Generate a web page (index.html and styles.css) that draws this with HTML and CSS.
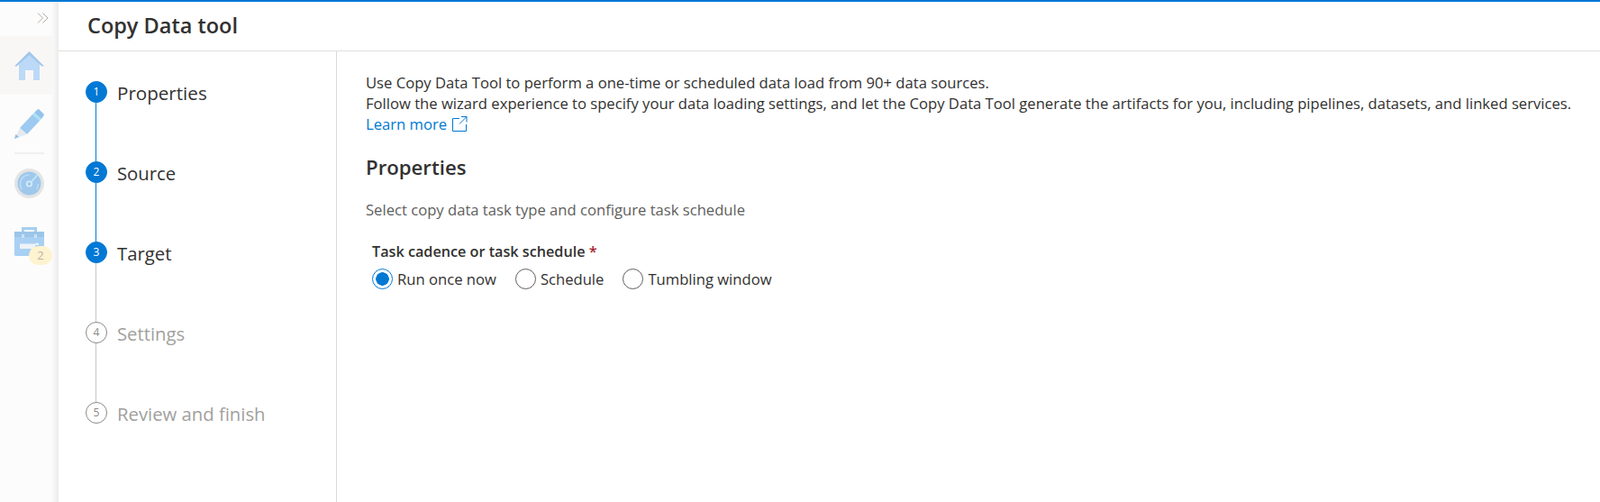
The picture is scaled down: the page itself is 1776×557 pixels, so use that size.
FILE: index.html
```html
<!DOCTYPE html>
<html lang="en">
<head>
    <meta charset="UTF-8">
    <title>Copy Data tool</title>
    <link rel="stylesheet" href="styles.css">
</head>
<body>
    <div class="app">
        <nav class="rail">
            <div class="rail-toggle">
                <svg width="13" height="12" viewBox="0 0 13 12"><path d="M1 .5l5.5 5.5L1 11.500M6.500 .5L12 6l-5.500 5.500" fill="none" stroke="#b3aca6" stroke-width="1"/></svg>
            </div>
            <div class="rail-item rail-home">
                <svg width="33" height="32" viewBox="0 0 33 32"><path d="M5 14L16.500 3 28 14V32H21V21H12V32H5Z" fill="#bcd9f7"/><path d="M16.500 0L33 16.500H30.500L16.500 4 2.500 16.500H0Z" fill="#9fc6ea"/></svg>
            </div>
            <div class="rail-item rail-pencil">
                <svg width="33" height="33" viewBox="0 0 33 33"><path d="M25 1l2-1 6 6-1 2-2 3-8-7z" fill="#92c3ec"/><path d="M22 4l8 7-2 2-8-7z" fill="#a9e0f5"/><path d="M20 6l8 7-14 15-8-7z" fill="#9ccaf0"/><path d="M6 21l8 7-14 5z" fill="#e6e9ee"/><path d="M0 33l1.500-5 3.500 3z" fill="#8fc0ea"/></svg>
            </div>
            <div class="rail-sep"></div>
            <div class="rail-item">
                <svg width="33" height="33" viewBox="0 0 33 33"><circle cx="16.500" cy="16.500" r="16.500" fill="#e4e4e4"/><circle cx="16.500" cy="16.500" r="13" fill="#9fc8ec"/><circle cx="16.500" cy="17" r="2.800" fill="none" stroke="#d5eefa" stroke-width="1.600"/><path d="M18.500 15l8-9" stroke="#c4ecf8" stroke-width="1.500"/><path d="M8.500 23a10 10 0 0 1 8-16M24.500 23a10 10 0 0 0 2-6" fill="none" stroke="#c4e3f6" stroke-width="1.200"/></svg>
            </div>
            <div class="rail-item rail-tools">
                <svg width="33" height="33" viewBox="0 0 33 33"><path d="M8 6V0h17v6h-3V3H11v3z" fill="#a5cff2"/><rect y="5" width="33" height="27" rx="1.500" fill="#a8d0f3"/><rect y="5" width="33" height="6" fill="#9cc5e8"/><rect x="8" y="8" width="3" height="4" fill="#c8e2f8"/><rect x="22" y="8" width="3" height="4" fill="#c8e2f8"/><path d="M6 18.500H23C24 17 26 17 27 18.500V20H23V24H6Z" fill="#eef2f6"/></svg>
                <span class="rail-badge">2</span>
            </div>
        </nav>
        <div class="main">
            <header class="title-bar">Copy Data tool</header>
            <div class="wizard">
                <ol class="steps">
                    <li class="step done current">
                        <span class="step-num">1</span><span class="step-label">Properties</span>
                    </li>
                    <li class="step done">
                        <span class="step-num">2</span><span class="step-label">Source</span>
                    </li>
                    <li class="step done last-done">
                        <span class="step-num">3</span><span class="step-label">Target</span>
                    </li>
                    <li class="step">
                        <span class="step-num">4</span><span class="step-label">Settings</span>
                    </li>
                    <li class="step">
                        <span class="step-num">5</span><span class="step-label">Review and finish</span>
                    </li>
                </ol>
                <section class="content">
                    <p class="intro">Use Copy Data Tool to perform a one-time or scheduled data load from 90+ data sources.</p>
                    <p class="intro">Follow the wizard experience to specify your data loading settings, and let the Copy Data Tool generate the artifacts for you, including pipelines, datasets, and linked services.</p>
                    <a class="learn" href="#">Learn more
                        <svg width="17" height="17" viewBox="0 0 17 17"><path d="M8 2.500H.5v14h15V9M10 .5h6v6M16 .5L8 8.500" fill="none" stroke="#0078d4" stroke-width="1"/></svg>
                    </a>
                    <h2>Properties</h2>
                    <p class="sub">Select copy data task type and configure task schedule</p>
                    <div class="field">
                        <div class="field-label">Task cadence or task schedule <span class="req">*</span></div>
                        <div class="radios">
                            <label class="radio checked"><span class="dot"></span>Run once now</label>
                            <label class="radio"><span class="dot"></span>Schedule</label>
                            <label class="radio"><span class="dot"></span>Tumbling window</label>
                        </div>
                    </div>
                </section>
            </div>
        </div>
    </div>
</body>
</html>
```

FILE: styles.css
```css
html, body {
    margin: 0;
    height: 100%;
    overflow: hidden;
}
body {
    font-family: "Open Sans", "Noto Sans", sans-serif;
    color: #323130;
    background-color: #fff;
}
.app {
    display: flex;
    height: 557px;
    border-top: 2px solid #0078d4;
    box-sizing: border-box;
}
.rail {
    width: 65px;
    flex-shrink: 0;
    background: linear-gradient(90deg, #fcfcfc 57px, #ebebeb 65px);
    display: flex;
    flex-direction: column;
}
.rail-toggle {
    height: 38px;
    display: flex;
    justify-content: flex-end;
    padding: 12px 11px 0 0;
    box-sizing: border-box;
}
.rail-toggle svg {
    display: block;
}
.rail-item {
    height: 65px;
    display: flex;
    align-items: center;
    padding-left: 16px;
    position: relative;
}
.rail-home {
    background-color: #f9f7f6;
    margin-right: 7px;
}
.rail-pencil {
    height: 64px;
}
.rail-sep {
    height: 2px;
    width: 33px;
    margin-left: 16px;
    background-color: #f0f0f0;
}
.rail-badge {
    position: absolute;
    left: 32px;
    top: 37px;
    width: 26px;
    height: 21px;
    border-radius: 11px;
    background-color: #fdf3cf;
    color: #b8b4ae;
    font-size: 13px;
    line-height: 21px;
    text-align: center;
}
.main {
    flex: 1;
    display: flex;
    flex-direction: column;
}
.title-bar {
    height: 54px;
    padding-left: 32px;
    border-bottom: 1px solid #e1dfdd;
    font-size: 23.500px;
    font-weight: 600;
    line-height: 53px;
    flex-shrink: 0;
}
.wizard {
    display: flex;
    flex: 1;
}
.steps {
    list-style: none;
    margin: 0;
    padding: 33px 0 0 30px;
    width: 278px;
    border-right: 1px solid #d9d9d9;
}
.step {
    position: relative;
    display: flex;
    align-items: flex-start;
    height: 89px;
    color: #a19f9d;
}
.step:not(:last-child)::after {
    content: "";
    position: absolute;
    left: 11px;
    top: 24px;
    bottom: 0;
    width: 1px;
    background-color: #c8c6c4;
}
.step.done {
    color: #323130;
}
.step.done::after {
    background-color: #0078d4;
}
.step.last-done::after {
    background-color: #c8c6c4;
}
.step-num {
    width: 22px;
    height: 22px;
    border: 1px solid #8a8886;
    border-radius: 50%;
    font-size: 12px;
    line-height: 22px;
    text-align: center;
    color: #8a8886;
    flex-shrink: 0;
    margin-right: 11px;
}
.step.done .step-num {
    background-color: #0078d4;
    border-color: #0078d4;
    color: #fff;
}
.step-label {
    font-size: 20.300px;
    line-height: 25px;
    margin-top: 1px;
}
.step.current .step-label {
    font-size: 20.600px;
    font-weight: 500;
}
.content {
    flex: 1;
    padding: 23px 0 0 32px;
    font-size: 16.640px;
}
.intro {
    margin: 0;
    line-height: 23px;
    white-space: nowrap;
}
.learn {
    display: flex;
    align-items: center;
    gap: 6px;
    color: #0078d4;
    text-decoration: none;
    line-height: 23px;
}
h2 {
    margin: 22px 0 0;
    font-size: 22.200px;
    font-weight: 600;
    line-height: 30px;
}
.sub {
    margin: 21px 0 0;
    color: #605e5c;
    line-height: 22px;
}
.field {
    margin: 24px 0 0 7px;
}
.field-label {
    font-size: 16.200px;
    font-weight: 600;
    line-height: 22px;
}
.req {
    color: #a4262c;
}
.radios {
    display: flex;
    gap: 21px;
    margin-top: 8px;
}
.radio {
    display: flex;
    align-items: center;
    gap: 5px;
}
.dot {
    width: 23px;
    height: 23px;
    box-sizing: border-box;
    border: 1px solid #605e5c;
    border-radius: 50%;
}
.radio.checked .dot {
    border-color: #0078d4;
    background: radial-gradient(circle, #0078d4 7px, #fff 7.500px);
}
```
